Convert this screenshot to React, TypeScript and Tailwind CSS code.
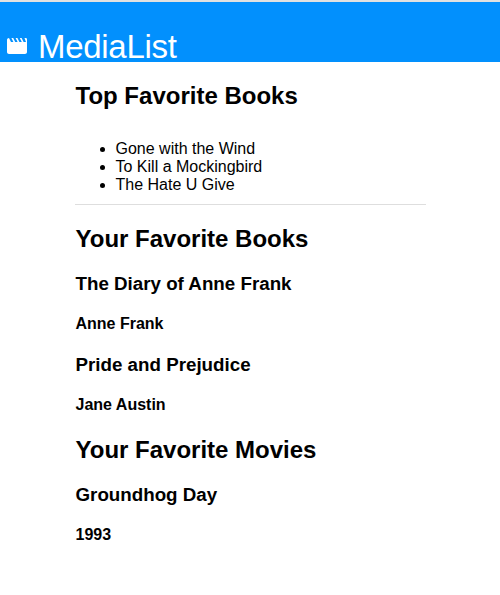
import React from "react";

type Entry = { title: string; detail: string };

const topBooks: string[] = ["Gone with the Wind", "To Kill a Mockingbird", "The Hate U Give"];
const books: Entry[] = [
  { title: "The Diary of Anne Frank", detail: "Anne Frank" },
  { title: "Pride and Prejudice", detail: "Jane Austin" },
];
const movies: Entry[] = [{ title: "Groundhog Day", detail: "1993" }];

function EntryItem({ title, detail }: Entry) {
  return (
    <div>
      <h3 className="mt-[21px] text-[18.75px] leading-[21px] font-bold">{title}</h3>
      <h4 className="mt-[21px] text-[16px] leading-[18px] font-bold">{detail}</h4>
    </div>
  );
}

export default function App() {
  return (
    <div className="min-h-[595px] bg-white font-['Liberation_Sans',Arial,sans-serif] text-black">
      <header className="flex h-[62px] items-end border-t-2 border-[#e1e1e1] bg-[#0290fd] pl-[5px] text-white">
        <svg className="mb-1 size-6" viewBox="0 0 24 24" fill="currentColor" aria-hidden="true">
          <path d="M19.500 4H20c1.100 0 2 .4 2 1v13c0 1.100-.9 2-2 2H4c-1.100 0-2-.9-2-2V6c0-1.100.9-2 2-2l2 4h2.400l-2-4h1.800l2 4h2.400l-2-4h1.800l2 4h2.400l-2-4h1.800l2 4H21z" />
        </svg>
        <span className="ml-[9px] text-[33px] leading-[30px] tracking-[-0.3px]">MediaList</span>
      </header>
      <main className="ml-[75px] w-[351px]">
        <h2 className="pt-5 pl-[0.5px] text-[24px] leading-[27px] font-bold">Top Favorite Books</h2>
        <ul className="mt-[31px] list-disc border-b border-[#dedede] pb-[10px] pl-[40.5px] text-[16px] leading-[18px]">
          {topBooks.map((book) => (
            <li key={book}>{book}</li>
          ))}
        </ul>
        <div className="pl-[0.5px]">
          <h2 className="mt-5 text-[24px] leading-[27px] font-bold">Your Favorite Books</h2>
          {books.map((book) => (
            <EntryItem key={book.title} {...book} />
          ))}
          <h2 className="mt-[22px] text-[24px] leading-[27px] font-bold">Your Favorite Movies</h2>
          {movies.map((movie) => (
            <EntryItem key={movie.title} {...movie} />
          ))}
        </div>
      </main>
    </div>
  );
}
